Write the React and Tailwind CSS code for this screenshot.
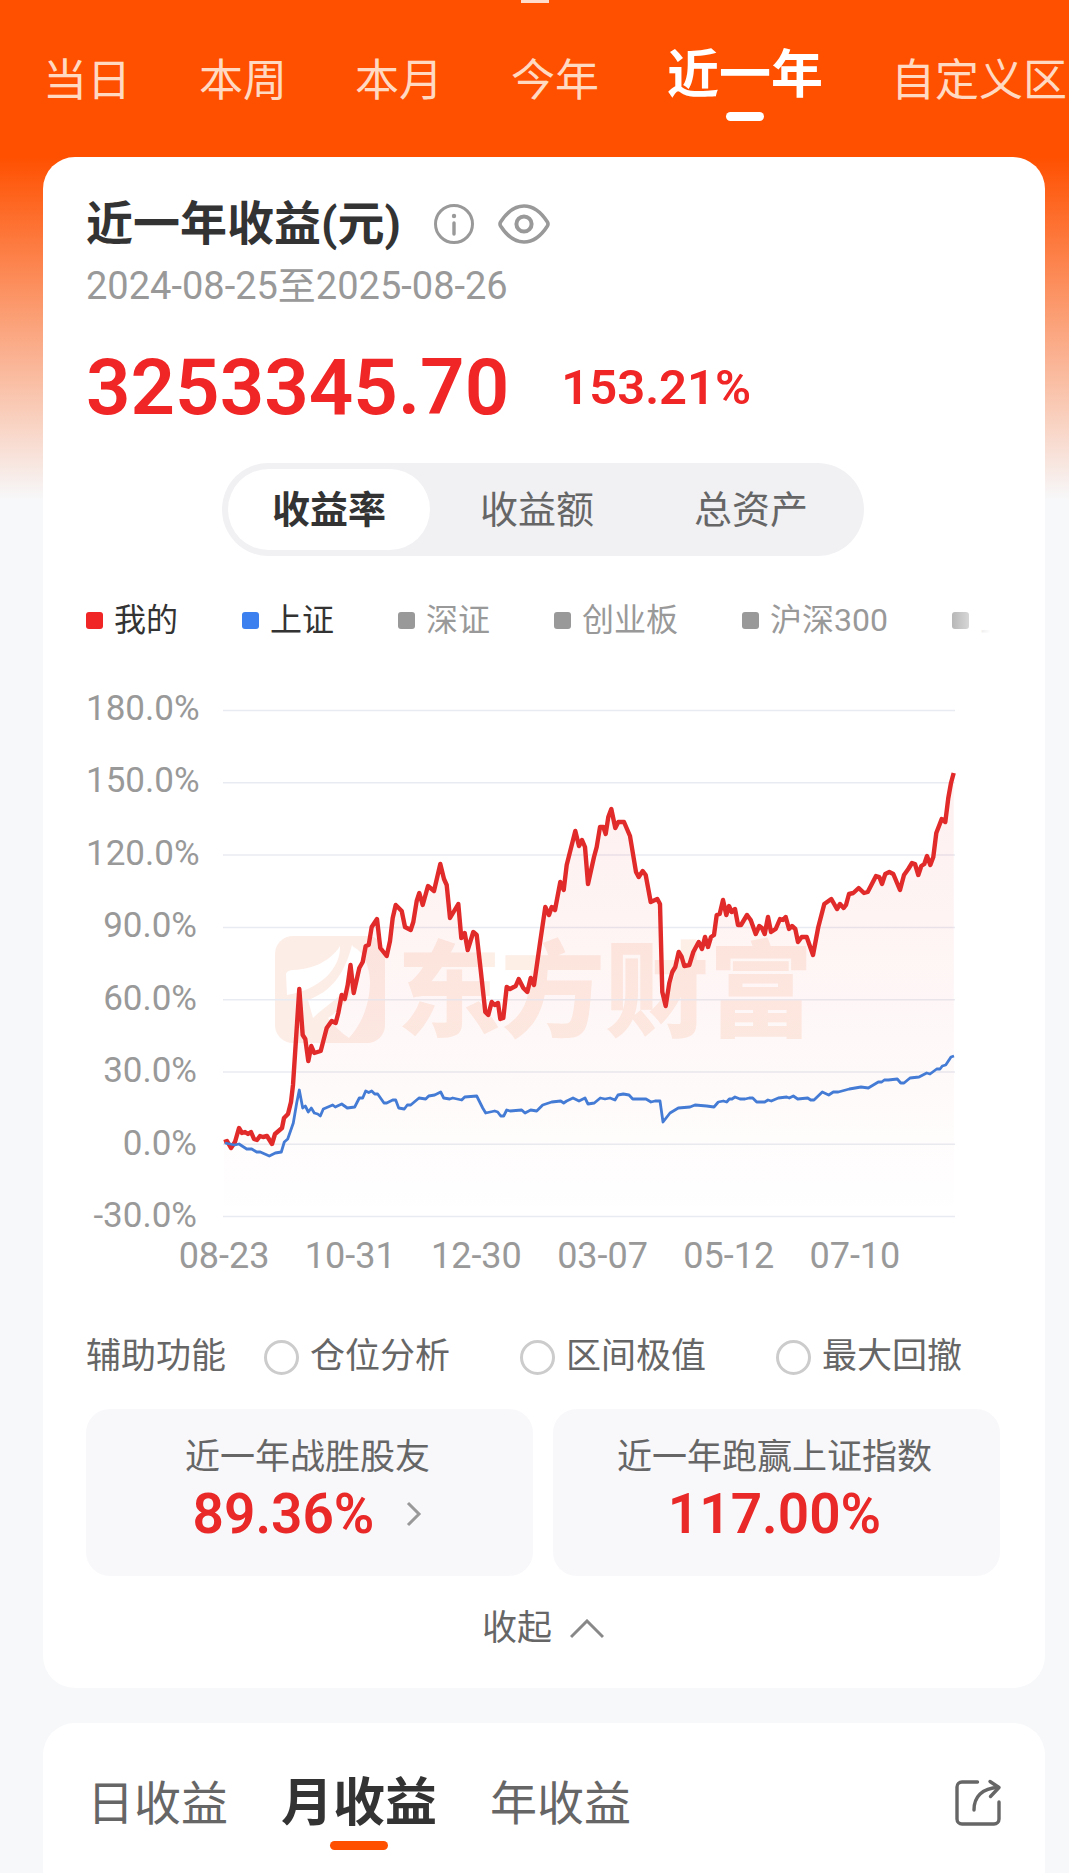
import { useState } from "react";

const periods = ["当日", "本周", "本月", "今年", "近一年", "自定义区"];
const chartModes = ["收益率", "收益额", "总资产"];
const yLabels = ["180.0%", "150.0%", "120.0%", "90.0%", "60.0%", "30.0%", "0.0%", "-30.0%"];
const xLabels = ["08-23", "10-31", "12-30", "03-07", "05-12", "07-10"];
const helpers = ["仓位分析", "区间极值", "最大回撤"];
const calendarTabs = ["日收益", "月收益", "年收益"];

const legend = [
  { name: "我的", dot: "bg-[#f02525]", text: "text-[#333333]" },
  { name: "上证", dot: "bg-[#3b80ee]", text: "text-[#333333]" },
  { name: "深证", dot: "bg-[#999999]", text: "text-[#999999]" },
  { name: "创业板", dot: "bg-[#999999]", text: "text-[#999999]" },
  { name: "沪深300", dot: "bg-[#999999]", text: "text-[#999999]" },
  { name: "上证50", dot: "bg-[#999999]", text: "text-[#999999]" },
];

// Puntos de las series en coordenadas del gráfico (732 x 508)
const myLine =
  "1,432 4,431 8,438 12,432 16,418 19,423 22,422 25,424 28,422 31,429 34,430 37,426 40,427 44,426 49,434 52,424 59,418 61,408 65,404 68,392 70,375 76.3,279 79.7,325 82.3,329 85.3,351 88.3,336 91.3,343 97.7,341 103.7,318 108.7,311 112.7,313 115.3,303 118.7,285 121.7,289 124.7,275 127.5,255 130.7,283 136.3,258 139.7,252 142.7,236 145.7,235 148.7,217 154,209 157.3,238 163.7,246 167,231 169.7,208 172.7,195 178.7,201 182,217 187.7,220 190.3,212 193.7,191 196.3,183 199.7,195 205,176 211,181 217.3,154 221,169 223.7,175 227,208 235.3,194 238.3,228 241.7,223 244.7,240 250.3,222 253.7,225 257.7,260 262.3,302 265.3,305 268.7,292 271.7,295 275,293 277.3,309 280.3,308 283.7,277 287,279 292.7,276 295.7,269 300.3,278 304.3,282 307.7,268 311,275 317,233 322.3,197 326,205 328.7,197 332,200 337.3,172 340.7,180 343.7,155 352.3,121 356,136 359,130 362,137 365,174 371,147 373.7,137 377,117 380.3,117 382.7,124 385.3,107 388.3,99 392.3,118 395.3,112 401,112 407,126 413,162 415.7,167 419.7,161 422.7,165 427.7,192 434.3,189 437,194 439.3,282 442.7,296 446.3,273 449.3,262 452.3,257 455.7,242 458.7,247 461.3,256 466.3,255 470.3,242 475.7,232 479,239 482,227 485,237 488,227 491,225 493.7,205 496.7,204 500,190 503.3,205 506,196 508.7,202 512,199 515,215 518,215 524,205 527.7,210 532.7,224 536.3,216 539,218 541.7,224 545,207 548,222 552.7,219 557,209 560,210 562.7,207 566,219 569,216 572.3,219 575,232 578.7,227 583.7,227 590,245 595.3,217 601.3,194 608.3,189 614,199 617,194 620.7,198 623,195 626,184 630.3,183 635.7,178 641,183 644.7,182 653,166 656.3,167 659,174 662.3,164 666.3,162 670.3,164 677,180 681,165 685.3,159 689,153 692,154 695.3,165 698.3,156 701.3,154 704,146 707.3,155 710.3,147 713.3,123 718.7,109 722.3,112 725.3,88 728,73 730.7,63";

const indexLine =
  "2,433 11.7,435 16,434 23.7,439 28.7,439 33.7,442 37.3,442 46.3,446 52.3,443 58.3,442 61.3,432 64.7,429 70.3,413 73.7,393 76.3,380 79.7,398 82.3,396 85.3,402 88.3,398 91.3,403 94.7,404 97.3,406 100.3,399 109.7,395 112.3,397 118.7,394 124.3,398 131.7,397 136.3,388 139.7,388 142.7,381 145.7,382.5 148.7,381 151.7,384 154.7,384 161,393 163.7,393 169.7,390 172.7,390 175.7,398 181.3,399 184.3,395 187.7,395 196,388 202.7,389 205.7,386 211.7,385 217.7,382 220.7,388 226.7,389 229.7,388 238.7,390 241.7,387 253.7,386 259.7,398 262.7,403 271.7,401 274.7,402 277.7,406 280.7,406 283.7,400 287,401 298.7,400 302,403 307.7,400 313.7,401 319.7,395 325.7,393 328.7,392 337.7,391 340.7,393 343.7,391 350,388 356,391 362,388 365,394 371.3,393 377.3,388 382,389 387,388 392,390 395,385 400.3,384 406,385 409.7,389 423,389 428,392 432,391 437,391 440,412 447,403 455.3,398 467,397 472,395 483.7,396 491,397 495.3,392 500.3,391 503.7,392 506.3,389 509,389 512,387 517,389 522,389 526.3,388 529.7,388 533.7,392 541.7,392 545,390 548.3,391 555.3,388 563.7,387 566.3,388 570.3,386 574.7,389 584.7,388 587.7,390 591,390 599.3,382 605.7,385 610.3,382 615.3,382 622.7,380 626.3,379 638,377 645.3,378 655.3,372 658.7,372 661.3,370 665.3,370 674.3,369 677.7,373 681,373 687,368 696,367 703.7,363 707,364 713.7,359 717,359 719.3,356 722.7,355 728,347 731,346";

const InfoIcon = () => (
  <svg className="h-10 w-10" viewBox="0 0 40 40" fill="none" stroke="#999999" strokeLinecap="round">
    <circle cx="20" cy="20" r="18.5" strokeWidth="3" />
    <circle cx="20" cy="12" r="2.2" fill="#999999" stroke="none" />
    <path d="M20 19v11" strokeWidth="3.4" />
  </svg>
);

const EyeIcon = () => (
  <svg className="h-10 w-[52px]" viewBox="0 0 52 40" fill="none" stroke="#999999" strokeWidth="3.6">
    <path
      d="M2.6 18C9 8 17 2 26 2s17 6 23.4 16q1.2 2 0 4C43 32 35 38 26 38S9 32 2.6 22q-1.2-2 0-4z"
      strokeLinejoin="round"
    />
    <circle cx="26" cy="20" r="7.6" strokeWidth="4" />
  </svg>
);

const ShareIcon = () => (
  <svg className="h-12 w-12" viewBox="0 0 48 48" fill="none" stroke="#666666" strokeWidth="3.4" strokeLinecap="round" strokeLinejoin="round">
    <path d="M23.5 3H8a5 5 0 0 0-5 5v32a5 5 0 0 0 5 5h32a5 5 0 0 0 5-5V23" />
    <path d="M20 31C20 18 28 9 44.5 8.5" />
    <path d="M36 2.5l9 6-8.5 9" />
  </svg>
);

const ProfitChart = () => (
  <svg className="block h-auto w-full overflow-visible" viewBox="0 0 732 508" fill="none" role="img" aria-label="收益率走势">
    <defs>
      <linearGradient id="areaFill" x1="0" y1="60" x2="0" y2="507" gradientUnits="userSpaceOnUse">
        <stop offset="0" stopColor="#f02525" stopOpacity="0.07" />
        <stop offset="0.5" stopColor="#f02525" stopOpacity="0.04" />
        <stop offset="1" stopColor="#f02525" stopOpacity="0" />
      </linearGradient>
    </defs>

    {/* Marca de agua */}
    <rect x="52" y="226" width="110" height="107" rx="18" fill="#fdede7" />
    <g fill="#ffffff">
      <path d="M63 264q1-4 8-4c18-1 36-8 46-24c1 22-20 44-53 49z" />
      <path d="M85 290c22-8 36-24 44-55c10 12 8 28-2 40c-12 14-26 22-37 33z" />
      <path d="M131 237c10 6 15 18 16 34c0 24-9 44-21 57q-12-8-21-20c20-12 34-36 26-71z" />
    </g>
    <text x="174" y="319" fontSize="104" fontWeight="900" fill="#fdeee6" fontFamily="'Noto Sans CJK SC', sans-serif">
      东方财富
    </text>

    <g stroke="#e9ebf2" strokeWidth="1.5">
      {yLabels.map((label, i) => (
        <line key={label} x1="0" x2="732" y1={0.5 + i * 72.3} y2={0.5 + i * 72.3} />
      ))}
    </g>
    <polygon points={`1,507 ${myLine} 731,507`} fill="url(#areaFill)" />
    <polyline points={myLine} stroke="#e12a2a" strokeWidth="4.4" strokeLinejoin="round" />
    <polyline points={indexLine} stroke="#447bd4" strokeWidth="2.8" strokeLinejoin="round" />
  </svg>
);

const App = () => {
  const [period, setPeriod] = useState("近一年");
  const [mode, setMode] = useState("收益率");
  const [calendarTab, setCalendarTab] = useState("月收益");

  return (
    <div className="flex min-h-screen flex-col overflow-hidden bg-[linear-gradient(#ff5000_157px,#f7f8fa_500px)] font-[Roboto,'Noto_Sans_CJK_SC',sans-serif] text-[#333333]">
      {/* Resto del título de la barra superior */}
      <div className="mx-auto h-[3px] w-7 bg-white/80" />

      {/* Selector de periodo */}
      <nav className="flex h-[154px] items-start gap-[68px] overflow-hidden whitespace-nowrap pt-[45px] pl-[43px]">
        {periods.map((item) =>
          item === period ? (
            <button key={item} className="flex shrink-0 flex-col items-center gap-2 text-[52px] leading-[56px] font-bold text-white">
              {item}
              <span className="h-[9px] w-[38px] rounded-full bg-white" />
            </button>
          ) : (
            <button key={item} onClick={() => setPeriod(item)} className="shrink-0 pt-[5px] text-[44px] leading-[56px] text-[#ffd9c2]">
              {item}
            </button>
          )
        )}
      </nav>

      <main className="flex flex-1 flex-col gap-[35px] pr-6 pl-[43px]">
        <section className="rounded-[32px] bg-white pt-[39px] pr-[45px] pb-[35px] pl-[43px]">
          <div className="flex items-center">
            <h1 className="text-[47px] leading-[56px] font-bold">近一年收益(元)</h1>
            <button aria-label="说明" className="ml-[33px]">
              <InfoIcon />
            </button>
            <button aria-label="隐藏金额" className="ml-6">
              <EyeIcon />
            </button>
          </div>
          <p className="mt-3 text-[38px] leading-[44px] text-[#999999]">2024-08-25至2025-08-26</p>

          <div className="mt-10 flex items-center gap-[52px] font-semibold text-[#f02525]">
            <span className="text-[78px] leading-[80px]">3253345.70</span>
            <span className="text-[49px] leading-[56px]">153.21%</span>
          </div>

          {/* Tipo de gráfico */}
          <div className="mx-auto mt-[35px] grid w-[642px] max-w-full grid-cols-[202px_1fr_1fr] rounded-full bg-[#f1f1f4] p-1.5">
            {chartModes.map((item) => (
              <button
                key={item}
                onClick={() => setMode(item)}
                className={`h-[81px] rounded-full text-[38px] leading-[48px] ${
                  mode === item ? "bg-white font-bold text-[#333333]" : "text-[#666666]"
                }`}
              >
                {item}
              </button>
            ))}
          </div>

          {/* Leyenda */}
          <div className="relative mt-11 overflow-hidden">
            <ul className="flex gap-16 whitespace-nowrap">
              {legend.map((item) => (
                <li key={item.name} className="flex shrink-0 items-center gap-[11px]">
                  <span className={`h-[17px] w-[17px] rounded-[3px] ${item.dot}`} />
                  <span className={`text-[32px] leading-10 ${item.text}`}>{item.name}</span>
                </li>
              ))}
            </ul>
            <div className="absolute inset-y-0 right-0 w-16 bg-linear-to-r from-transparent to-white to-85%" />
          </div>

          {/* Gráfico */}
          <div className="mt-[51px] flex gap-[26px] pr-[45px]">
            <div className="flex w-[111px] shrink-0 flex-col justify-between text-right text-[35px] leading-9 text-[#999999]">
              {yLabels.map((label) => (
                <span key={label}>{label}</span>
              ))}
            </div>
            <div className="min-w-0 flex-1 pt-[19px] pb-4">
              <ProfitChart />
            </div>
          </div>
          <div className="mt-0.5 grid grid-cols-6 pr-[82px] pl-[75px] text-center text-4xl leading-10 text-[#999999]">
            {xLabels.map((label) => (
              <span key={label}>{label}</span>
            ))}
          </div>

          {/* Funciones auxiliares */}
          <div className="mt-[57px] flex items-center whitespace-nowrap text-[35px] leading-[48px] text-[#666666]">
            <span className="mr-[38px]">辅助功能</span>
            <div className="flex gap-[70px]">
              {helpers.map((item) => (
                <label key={item} className="flex items-center gap-[11px]">
                  <input
                    type="radio"
                    name="helper"
                    className="h-[35px] w-[35px] appearance-none rounded-full border-3 border-[#cccccc] checked:border-[#ff5000]"
                  />
                  {item}
                </label>
              ))}
            </div>
          </div>

          <div className="mt-7 grid grid-cols-2 gap-5 text-center">
            <button className="rounded-3xl bg-[#f8f8fb] pt-[25px] pr-1 pb-[30px]">
              <span className="block text-[35px] leading-[48px] text-[#666666]">近一年战胜股友</span>
              <span className="flex items-center justify-center gap-8 text-[55px] leading-[64px] font-semibold text-[#e92828]">
                89.36%
                <svg className="h-7 w-4" viewBox="0 0 16 28" fill="none" stroke="#999999" strokeWidth="3">
                  <path d="M2 3l11 11L2 25" />
                </svg>
              </span>
            </button>
            <div className="rounded-3xl bg-[#f8f8fb] pt-[25px] pr-1 pb-[30px]">
              <p className="text-[35px] leading-[48px] text-[#666666]">近一年跑赢上证指数</p>
              <p className="text-[55px] leading-[64px] font-semibold text-[#e92828]">117.00%</p>
            </div>
          </div>

          <button className="mx-auto mt-[29px] flex items-center gap-[18px] text-[35px] leading-[48px] text-[#666666]">
            收起
            <svg className="h-5 w-[34px]" viewBox="0 0 34 20" fill="none" stroke="#888888" strokeWidth="3">
              <path d="M1 18L17 2l16 16" />
            </svg>
          </button>
        </section>

        <section className="flex-1 rounded-t-[32px] bg-white pt-[53px] pr-[43px] pl-11">
          <div className="flex items-start justify-between">
            <div className="flex items-start gap-[53px]">
              {calendarTabs.map((item) =>
                item === calendarTab ? (
                  <button key={item} className="flex flex-col items-center gap-[9px] text-[52px] leading-[56px] font-bold">
                    {item}
                    <span className="h-[9px] w-[58px] rounded-full bg-[#ff5000]" />
                  </button>
                ) : (
                  <button key={item} onClick={() => setCalendarTab(item)} className="text-[47px] leading-[56px] text-[#666666]">
                    {item}
                  </button>
                )
              )}
            </div>
            <button aria-label="分享" className="pt-[3px]">
              <ShareIcon />
            </button>
          </div>
        </section>
      </main>
    </div>
  );
};

export default App;
